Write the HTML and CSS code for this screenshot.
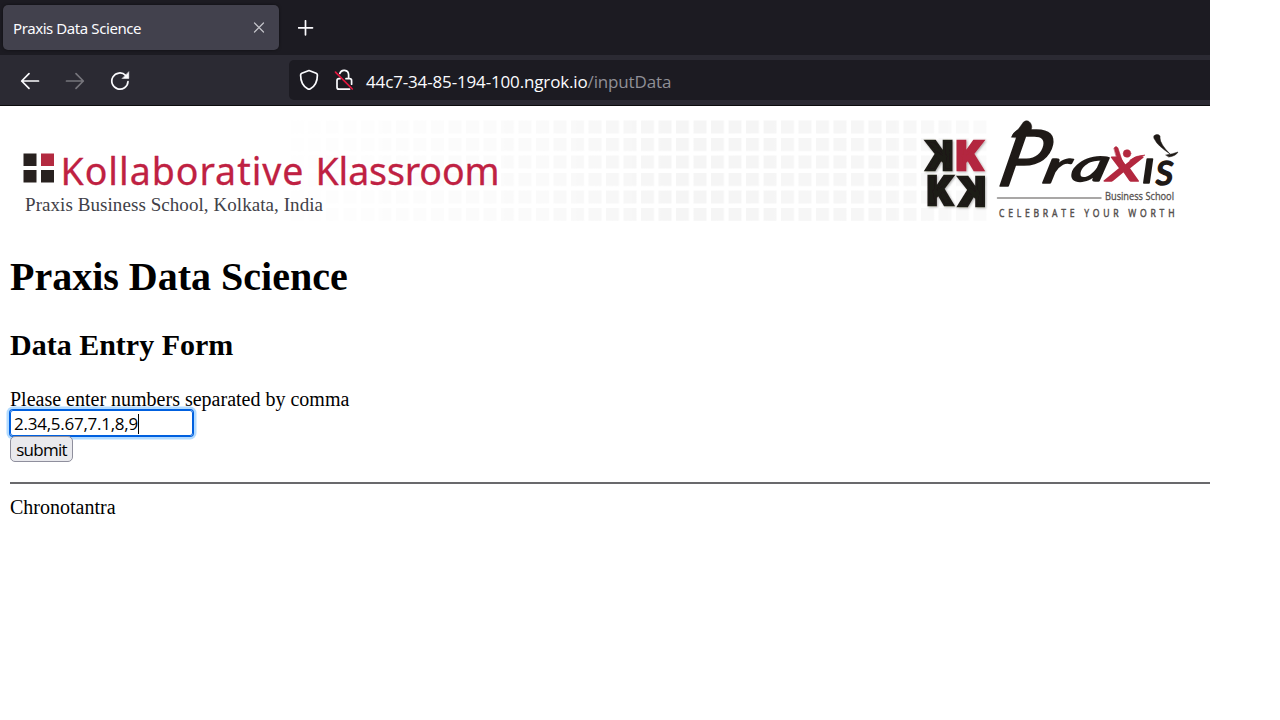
FILE: index.html
```html
<!DOCTYPE html>
<html lang="en">
<head>
<meta charset="utf-8">
<title>Praxis Data Science</title>
<link rel="stylesheet" href="styles.css">
</head>
<body>
<div class="window">
  <header class="chrome">
    <div class="tabs">
      <div class="tab">
        <span class="tab-title">Praxis Data Science</span>
        <svg class="close" width="12" height="12" viewBox="0 0 12 12"><path d="M1.500 1l9 9M10.500 1l-9 9"/></svg>
      </div>
      <svg class="plus" width="16" height="16" viewBox="0 0 16 16"><path d="M7.500 .8v14M.5 7.800h14"/></svg>
    </div>
    <div class="toolbar">
      <nav class="nav">
        <svg width="20" height="20" viewBox="0 0 20 20"><path d="M18.500 10H1.700M9 2.700L1.700 10 9 17.300"/></svg>
        <svg class="disabled" width="20" height="20" viewBox="0 0 20 20"><path d="M1.500 10h16.800M11 2.700l7.300 7.300-7.300 7.300"/></svg>
        <svg width="20" height="20" viewBox="0 0 20 20"><path d="M18 10.500A8.100 8.100 0 1 1 15.600 4.300"/><path class="solid" d="M18.800 1v6.500h-6.500z"/></svg>
      </nav>
      <div class="address">
        <svg width="20" height="22" viewBox="0 0 20 22"><path d="M10 1.500l7.200 2.700q1.200.5 1.200 1.800c0 6.500-2.400 11.200-7 13.800q-1.400.8-2.800 0C4 17.200 1.600 12.500 1.600 6q0-1.300 1.200-1.800z"/></svg>
        <svg class="lock" width="20" height="22" viewBox="0 0 20 22"><path d="M5.800 4.500a4.500 4.500 0 0 1 8.800 1.200v4h1q2 0 2 2v3.500M12 9.700h2.600M6 9.700H5q-2 0-2 2v6.500q0 2 2 2h10.500"/><path class="slash" d="M1.500 3.200l16.800 16.800"/></svg>
        <span class="url">44c7-34-85-194-100.ngrok.io<span class="path">/inputData</span></span>
      </div>
    </div>
  </header>
  <svg class="banner" width="1210" height="125" viewBox="0 106 1210 125">
    <defs>
      <pattern id="squares" x="291" y="120.500" width="17.500" height="17.500" patternUnits="userSpaceOnUse"><rect width="13" height="13" fill="#f5f5f5"/></pattern>
      <linearGradient id="fade"><stop offset="0" stop-color="#fff" stop-opacity=".1"/><stop offset=".35" stop-color="#fff" stop-opacity=".5"/><stop offset=".55" stop-color="#fff"/><stop offset=".85" stop-color="#fff" stop-opacity=".9"/><stop offset="1" stop-color="#fff" stop-opacity=".5"/></linearGradient>
      <mask id="fade-mask"><rect x="291" y="120" width="696" height="102" fill="url(#fade)"/></mask>
      <filter id="shadow"><feDropShadow dx="1" dy="1" stdDeviation="1" flood-opacity=".3"/></filter>
    </defs>
    <rect x="291" y="120" width="696" height="101" fill="url(#squares)" mask="url(#fade-mask)"/>
    <g fill="#28211f">
      <rect x="23.500" y="153.500" width="13" height="12.500"/>
      <rect x="41" y="153.500" width="13" height="12.500" fill="#b32a40"/>
      <rect x="23.500" y="170" width="13" height="12.500"/>
      <rect x="41" y="170" width="13" height="12.500"/>
    </g>
    <text class="brand" x="60.500" y="184.500" textLength="243">Kollaborative</text>
    <text class="brand" x="315.500" y="184.500" textLength="184">Klassroom</text>
    <text class="school" x="25" y="211" textLength="298">Praxis Business School, Kolkata, India</text>
    <g class="blocks" filter="url(#shadow)">
      <text transform="translate(953.500 170) scale(-1 1)" textLength="27" lengthAdjust="spacingAndGlyphs">K</text>
      <text class="red" transform="translate(955.500 170)" textLength="27" lengthAdjust="spacingAndGlyphs">K</text>
      <text transform="translate(926.500 204.500)" textLength="26" lengthAdjust="spacingAndGlyphs">K</text>
      <text transform="translate(986 205.500) scale(-1 1)" textLength="27" lengthAdjust="spacingAndGlyphs">K</text>
    </g>
    <g class="script">
      <text class="cap" transform="translate(996 186) skewX(-12)" textLength="48" lengthAdjust="spacingAndGlyphs">P</text>
      <path d="M1011.500 137q1-4 7-8l5-7q4-3 7 1 3 5-1 9l-9 6z"/>
      <text transform="translate(1041 183) skewX(-12)" textLength="26" lengthAdjust="spacingAndGlyphs">r</text>
      <text transform="translate(1069 181) skewX(-14)" textLength="37" lengthAdjust="spacingAndGlyphs">a</text>
      <text class="red" transform="translate(1107 181) skewX(-3)" textLength="34" lengthAdjust="spacingAndGlyphs">x</text>
      <text transform="translate(1142 183)" textLength="13" lengthAdjust="spacingAndGlyphs">ı</text>
      <text transform="translate(1156 185)" textLength="18" lengthAdjust="spacingAndGlyphs">s</text>
      <path class="red" d="M1114 148q2-3 4 0l5 15-4 3z"/>
      <circle class="red" cx="1127" cy="153.500" r="3.800"/>
      <path class="red" d="M1130 160q7-5 15-5-7 3-13 9z"/>
      <path d="M1154 136c3-3 7-1 6 2q0 6 10 16-13-9-15-14-2-2-1-4z"/>
      <path d="M1166 155q7-1 12-3-2 4-9 5z"/>
    </g>
    <path d="M997.500 198h103.500" stroke="#8d8a89" stroke-width="1.500"/>
    <text class="subtitle" x="1105" y="199.500" textLength="69" lengthAdjust="spacingAndGlyphs">Business School</text>
    <text class="motto" transform="translate(999 217) scale(.75 1)" textLength="234">CELEBRATE YOUR WORTH</text>
  </svg>
  <main class="content">
    <h1>Praxis Data Science</h1>
    <h2>Data Entry Form</h2>
    <form class="entry">
      <label for="numbers">Please enter numbers separated by comma</label>
      <div class="field" id="numbers"><span>2.34,5.67,7.1,8,9</span><i class="caret"></i></div>
      <button class="submit" type="button">submit</button>
    </form>
    <hr>
    <footer>Chronotantra</footer>
  </main>
</div>
</body>
</html>
```
FILE: styles.css
```css
* { box-sizing: border-box; }
body { margin: 0; background: #fff; color: #000; font-family: "Liberation Serif", serif; font-size: 20px; }
.window { width: 1210px; height: 720px; overflow: hidden; }
svg { display: block; flex: none; fill: none; stroke-linecap: round; stroke-linejoin: round; }
.chrome { height: 106px; background: #2b2a33; border-bottom: 1px solid #0c0c0d; font-family: "Noto Sans", sans-serif; color: #fbfbfe; }
.chrome svg { stroke: #fbfbfe; stroke-width: 1.7; }
.tabs { height: 55px; background: #1c1b22; padding: 5px 3px; display: flex; align-items: center; }
.tab { width: 276px; height: 45px; border-radius: 5px; background: #42414d; box-shadow: 0 0 3px #0008; padding: 0 14px 0 10px; display: flex; justify-content: space-between; align-items: center; }
.tab-title { font-family: "Noto Sans", sans-serif; font-size: 15px; letter-spacing: -.42px; white-space: nowrap; }
.chrome .close { stroke: #c4c4ca; stroke-width: 1.2; }
.plus { margin-left: 19px; }
.toolbar { height: 50px; padding: 5px 0 5px 20px; display: flex; justify-content: space-between; }
.nav { display: flex; gap: 25px; align-items: center; padding-top: 1px; }
.chrome .disabled { stroke: #76757c; }
.chrome .solid { fill: #fbfbfe; stroke-width: .5; }
.address { width: 921px; height: 40px; border-radius: 5px 0 0 5px; background: #1c1b22; padding-left: 10px; display: flex; align-items: center; }
.lock { margin-left: 15px; }
.chrome .slash { stroke: #e5173f; }
.url { margin-left: 12px; font-family: "Open Sans", sans-serif; font-size: 17px; letter-spacing: -.15px; white-space: nowrap; padding-top: 2px; }
.path { color: #8f8f96; }
.brand { font: 37.500px "Noto Sans", sans-serif; fill: #bf2142; stroke: #bf2142; stroke-width: .3; }
.school { font: 19px "Liberation Serif", serif; fill: #414148; }
.blocks { font: 900 41px Roboto, sans-serif; fill: #1f1a17; stroke: #1f1a17; stroke-width: 2.5; stroke-linejoin: miter; }
.red { fill: #b3283f; stroke: #b3283f; }
.script { font: italic 47px Lato, sans-serif; fill: #1f1a17; stroke: #1f1a17; stroke-width: 1.6; }
.cap { font-size: 78px; }
.script path, .script circle { stroke-width: .5; }
.subtitle { font: 11px "Open Sans", sans-serif; fill: #55504e; stroke: #55504e; stroke-width: .3; }
.motto { font: 11.500px "Open Sans", sans-serif; fill: #55504e; stroke: #55504e; stroke-width: .5; }
.content { padding: 22px 0 0 10px; }
h1 { margin: 0; font-size: 40px; line-height: 48px; }
h2 { margin: 26px 0 0; font-size: 30px; line-height: 36px; }
.entry { margin: 24px 0 0; display: flex; flex-direction: column; align-items: flex-start; }
.entry label { line-height: 24px; }
.field { width: 183px; height: 26px; margin-top: -1px; padding: 1px 0 0 3px; border: 1px solid #0060df; border-radius: 3px; box-shadow: 0 0 0 1px #0060df, 0 0 0 3.5px #b3dbff; display: flex; align-items: center; font: 17px/22px "Open Sans", sans-serif; }
.field span { letter-spacing: -.25px; }
.caret { width: 1px; height: 20px; background: #000; }
.submit { width: 63px; height: 26px; padding: 2px 0 0; border: 1px solid #8f8f9d; border-radius: 5px; background: #e9e9ed; color: #000; font: 17px/22px "Open Sans", sans-serif; letter-spacing: -.75px; position: relative; }
hr { margin: 20px 0 11px; border: 0; height: 2px; background: #69696c; }
footer { line-height: 24px; }
```
